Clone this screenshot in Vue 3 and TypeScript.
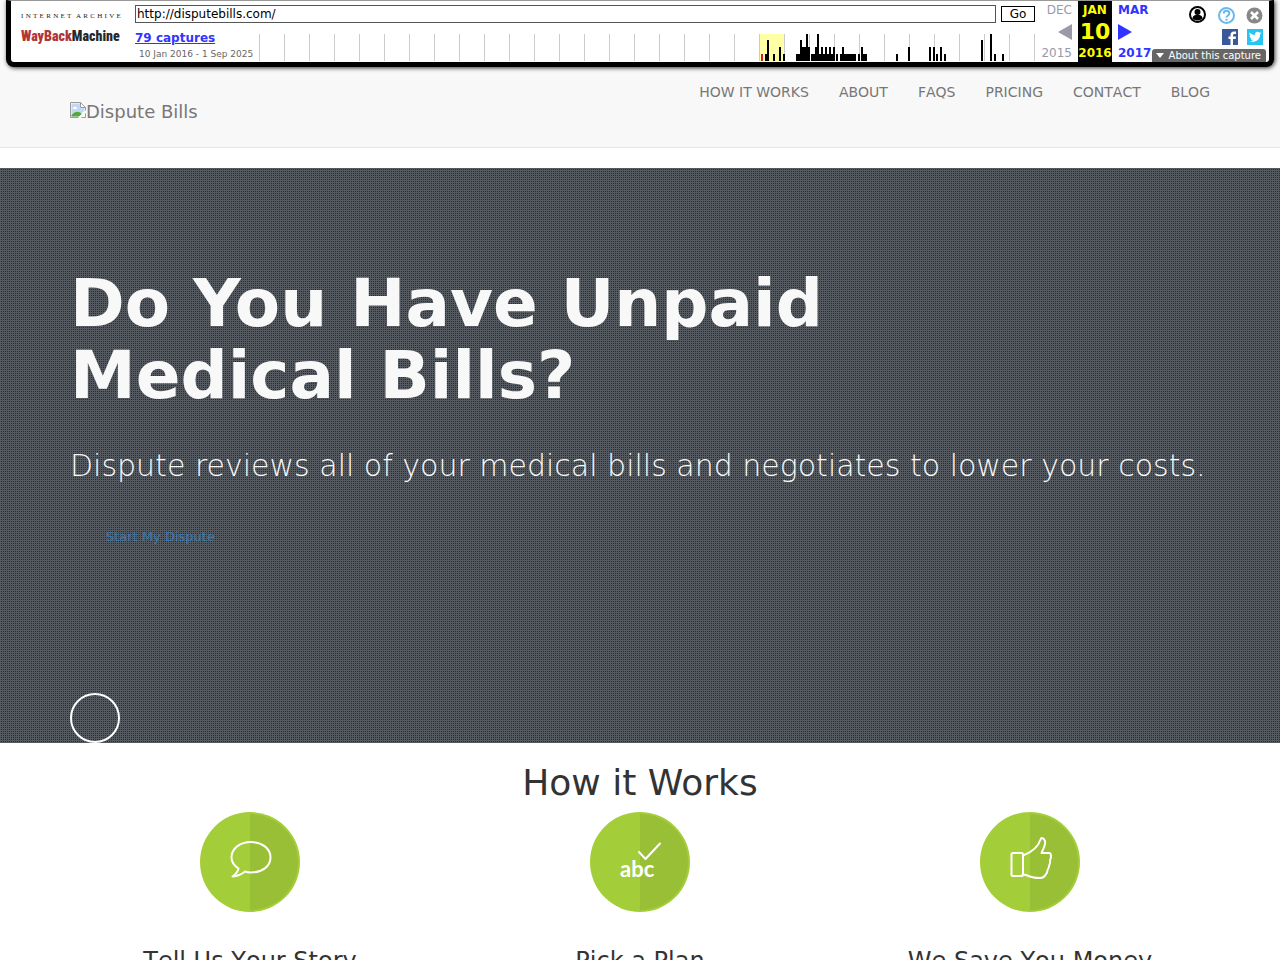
<script setup lang="ts">
interface Bar { x: number; w: number; h: number }
interface Step { title: string; icon: 'speech' | 'check' | 'thumb' }

const nav: string[] = ['HOW IT WORKS', 'ABOUT', 'FAQS', 'PRICING', 'CONTACT', 'BLOG']
const steps: Step[] = [
  { title: 'Tell Us Your Story', icon: 'speech' },
  { title: 'Pick a Plan', icon: 'check' },
  { title: 'We Save You Money', icon: 'thumb' },
]
const years: number[] = Array.from({ length: 32 }, (_, i) => i * 25)
const raw: [number, number, number][] = [
  [506, 2, 7], [508, 2, 21], [514, 2, 7], [520, 2, 14], [524, 2, 7],
  [537, 4, 7], [541, 2, 21], [543, 4, 14], [547, 2, 27], [549, 2, 14],
  [552, 4, 7], [556, 2, 14], [558, 2, 27], [560, 2, 7], [562, 2, 14],
  [564, 2, 7], [566, 2, 14], [568, 2, 7], [570, 2, 14], [572, 2, 7],
  [574, 2, 14], [577, 2, 7], [581, 2, 7], [583, 2, 14], [585, 12, 7],
  [599, 2, 7], [602, 2, 14], [604, 4, 7], [637, 2, 7], [649, 2, 14],
  [670, 2, 14], [674, 2, 14], [677, 2, 7], [681, 2, 14], [685, 2, 7],
  [722, 2, 21], [731, 2, 27], [735, 2, 7], [743, 2, 7],
]
const bars: Bar[] = raw.map(([x, w, h]) => ({ x, w, h }))
</script>

<template>
  <div class="page">
    <div class="archive">
      <a class="wb-logo" href="#" aria-label="Internet Archive Wayback Machine">
        <span class="wb-top"><i v-for="(c, n) in 'INTERNET ARCHIVE'" :key="n">{{ c }}</i></span>
        <span class="wb-word"><b>WayBack</b>Machine</span>
      </a>
      <div class="wb-main">
        <form class="wb-url" @submit.prevent>
          <input type="text" aria-label="Web address" value="http://disputebills.com/" />
          <button type="submit">Go</button>
        </form>
        <div class="wb-row">
          <div class="wb-caps">
            <a href="#">79 captures</a>
            <span>10 Jan 2016 - 1 Sep 2025</span>
          </div>
          <svg class="spark" viewBox="0 0 776 27" preserveAspectRatio="none" role="img" aria-label="Captures by year" shape-rendering="crispEdges">
            <rect x="500" width="25" height="27" fill="#ffffa5" />
            <rect v-for="y in years" :key="y" :x="y" width="1" height="27" fill="#ccc" />
            <rect x="502" y="20" width="2" height="7" fill="#c23" />
            <rect v-for="b in bars" :key="b.x" :x="b.x" :y="27 - b.h" :width="b.w" :height="b.h" />
          </svg>
        </div>
      </div>
      <div class="wb-dates">
        <div class="col prev"><span>DEC</span><svg width="14" height="16" aria-hidden="true"><path d="M14 0v16L0 8z" fill="#99a" /></svg><span>2015</span></div>
        <div class="col now"><span>JAN</span><strong>10</strong><span>2016</span></div>
        <div class="col next"><a href="#">MAR</a><svg width="14" height="16" aria-hidden="true"><path d="M0 0v16l14-8z" fill="#33f" /></svg><a href="#">2017</a></div>
      </div>
      <div class="wb-tools">
        <div class="icons">
          <a href="#" aria-label="Sign in"><svg width="18" height="18" viewBox="0 0 18 18"><circle cx="8.500" cy="8.500" r="7.500" fill="#fff" stroke="#000" stroke-width="2" /><circle cx="8.500" cy="6" r="3" /><path d="M3.500 12.500q0-3 3-3.500h4q3 .5 3 3.500-2 2-5 2t-5-2z" /></svg></a>
          <a href="#" aria-label="Help"><svg width="18" height="18" viewBox="0 0 18 18" fill="none" stroke="#6bb9ea" stroke-width="2"><circle cx="9.500" cy="9.500" r="7.500" /><path d="M6.700 7.500q0-2.700 2.800-2.700t2.800 2.700q0 1.300-1.500 2.100-1.300.7-1.300 1.900M9.500 12.800v2" /></svg></a>
          <button type="button" aria-label="Close"><svg width="18" height="18" viewBox="0 0 18 18"><circle cx="9.500" cy="9.500" r="8" fill="#888" /><path d="M6 6l7 7M13 6l-7 7" stroke="#fff" stroke-width="2.600" /></svg></button>
        </div>
        <div class="icons social">
          <a href="#" aria-label="Facebook"><svg width="16" height="16" viewBox="0 0 16 16"><path fill="#3b5998" d="M0 0h16v16H0z" /><path fill="#fff" d="M8.500 16v-6h-2V7.500h2V6q0-3.500 3.500-3.500h2V5h-1.500Q11 5 11 6.200v1.300h3l-.4 2.500H11v6z" /></svg></a>
          <a href="#" aria-label="Twitter"><svg width="16" height="16" viewBox="0 0 16 16"><path fill="#28c4f2" d="M0 0h16v16H0z" /><path fill="#fff" d="M2.500 3.500Q5 6 8 6q-.3-3 2.500-3.300 1 0 1.800.8l1.700-.6-1 1.500 1.500-.3-1.500 1.500q0 4-3 6t-7.500.9q2.200 0 3.500-1.100-2-.2-2.500-1.900h1.200Q2.500 8.700 2.500 6.500l1.200.3Q1.700 5.300 2.500 3.500z" /></svg></a>
        </div>
        <button type="button" class="about"><svg width="10" height="6" aria-hidden="true"><path d="M1 0h8L5 5z" fill="#fff" /></svg>About this capture</button>
      </div>
    </div>

    <header class="navbar">
      <div class="container bar">
        <a class="brand" href="#"><svg width="16" height="16" viewBox="0 0 16 16" aria-hidden="true"><path d="M.5 .5h10l5 5v10H.5z" fill="#fff" stroke="#9a9a9a" /><path d="M1.500 1.500h8.500v4.500h4.500v3L7 14.500H1.500z" fill="#c2d8f5" /><path d="M3 6q1-2 2.500-1Q7 5 7 7H3z" fill="#fff" /><path d="M1.500 14.500V13q5.500-6 10.500-1l-3 2.500z" fill="#55a83c" /><path d="M10.500 .5v5h5z" fill="#fff" stroke="#9a9a9a" /><path d="M8 16l8-8v3l-5 5z" fill="#f8f8f8" /></svg><span>Dispute Bills</span></a>
        <nav><a v-for="n in nav" :key="n" href="#">{{ n }}</a></nav>
      </div>
    </header>

    <section class="hero">
      <div class="container hero-in">
        <h1>Do You Have Unpaid<br />Medical Bills?</h1>
        <p>Dispute reviews all of your medical bills and negotiates to lower your costs.</p>
        <a class="cta" href="#">Start My Dispute</a>
        <a class="ring" href="#how" aria-label="Scroll down"></a>
      </div>
    </section>

    <section id="how" class="container how">
      <h2>How it Works</h2>
      <div class="steps">
        <article v-for="s in steps" :key="s.title">
          <svg width="100" height="100" viewBox="0 0 100 100" fill="none" stroke="#fff" stroke-width="2" stroke-linejoin="round" stroke-linecap="round" aria-hidden="true">
            <circle cx="50" cy="50" r="50" fill="#a4ce39" stroke="none" />
            <path d="M50 2a48 48 0 0 1 0 96z" fill="#99bf36" stroke="none" />
            <path v-if="s.icon === 'speech'" d="M38.500 56.500C34 53.500 31.500 49.500 31.500 45.500 31.500 36.500 40 30 51 30s19.500 6.500 19.500 15.500S62 60.500 51 60.500q-3.500 0-6-1-5.500 4.500-12.500 5 5-3.500 6-8z" />
            <template v-else-if="s.icon === 'check'">
              <path d="M49 40l6.500 7L70 31.500" />
              <text class="abc" x="30" y="65">abc</text>
            </template>
            <g v-else><rect x="31.500" y="41" width="11.500" height="23" rx="1.500" /><path d="M43 43.500c8-3 15-8 17.500-16 .5-2 3.500-2 4.500 1.500 1 4-2 8-3.500 12h7.500q2 0 2 3 0 3-1 4 .5 3-1 6 0 2-1.500 4 0 3-1.500 4-2 4-6 4-8 0-14-3l-3.500-.5" /></g>
          </svg>
          <h3>{{ s.title }}</h3>
        </article>
      </div>
    </section>
  </div>
</template>

<style>
html { scrollbar-width: none; }
body { margin: 0; background: #fff; }
</style>
<style scoped>
* { box-sizing: border-box; }
.page { font-family: "DejaVu Sans", sans-serif; font-size: 14px; line-height: 20px; color: #333; font-kerning: none; }
a { text-decoration: none; color: #337ab7; }
button { font-family: inherit; cursor: pointer; }
svg { display: block; flex: none; }
.archive { position: absolute; top: 0; left: 6px; right: 6px; height: 67px; display: flex; background: #fff; border: 5px solid #000; border-top: 1px solid #999; border-radius: 0 0 8px 8px; box-shadow: 1px 1px 4px #333; z-index: 2; font-size: 12px; line-height: 14px; }
.wb-logo { width: 124px; padding: 9px 0 0 10px; }
.wb-top { display: flex; justify-content: space-between; width: 100px; height: 12px; font-family: "Liberation Serif", serif; font-size: 7px; line-height: 12px; color: #222; }
.wb-top i { font-style: normal; }
.wb-word { display: block; font: 900 14px/28px "Liberation Sans Narrow", "Roboto Condensed", "Liberation Sans", sans-serif; color: #25282b; white-space: nowrap; }
.wb-word b { color: #b0353a; font-weight: 900; }
.wb-main { flex: 1; padding-top: 4px; min-width: 0; }
.wb-url { display: flex; gap: 5px; align-items: center; height: 18px; }
.wb-url input { flex: 1; min-width: 0; height: 18px; padding: 0 1px; border: 1px solid #555; border-radius: 0; font: 12px "DejaVu Sans", sans-serif; color: #000; background: #fff; }
.wb-url button { width: 34px; height: 16px; padding: 0; border: 1px solid #000; background: #fff; color: #000; font-size: 12px; line-height: 14px; }
.wb-row { display: flex; padding-top: 7px; }
.wb-caps { width: 124px; flex: none; white-space: nowrap; }
.wb-caps a { display: block; font-weight: bold; color: #33f; text-decoration: underline; line-height: 16px; }
.wb-caps span { display: block; padding-left: 4px; font-size: 9px; line-height: 16px; color: #666; }
.spark { flex: 1; min-width: 0; height: 27px; margin-top: 4px; }
.wb-dates { display: flex; width: 118px; }
.col { display: flex; flex-direction: column; justify-content: space-between; padding: 2px 0; height: 61px; color: #99a; }
.col a { color: #33f; font-weight: bold; }
.prev { width: 43px; align-items: flex-end; padding-right: 6px; }
.now { width: 34px; background: #000; color: #ff0; font-weight: bold; align-items: center; }
.now strong { font-size: 22px; line-height: 24px; }
.next { width: 41px; padding-left: 6px; }
.wb-tools { width: 116px; padding-top: 5px; display: flex; flex-direction: column; align-items: flex-end; }
.icons { display: flex; gap: 10px; padding-right: 6px; }
.icons button { border: 0; padding: 0; background: none; }
.social { gap: 9px; padding-top: 5px; }
.about { display: flex; align-items: center; gap: 4px; margin: 4px 3px 0 0; padding: 0 5px 0 3px; height: 14px; border: 0; border-radius: 3px 3px 0 0; background: #666; color: #fff; font-size: 10px; white-space: nowrap; }
.container { width: 1170px; max-width: 100%; margin: 0 auto; padding: 0 15px; }
.navbar { height: 148px; background: #f8f8f8; border-bottom: 1px solid #e7e7e7; margin-bottom: 20px; }
.bar { display: flex; justify-content: space-between; align-items: flex-start; }
.brand { display: flex; align-items: flex-start; margin-top: 102px; font-size: 18px; color: #777; }
nav { display: flex; gap: 30px; margin-top: 82px; }
nav a { color: #777; }
.hero { background: conic-gradient(from 90deg at 1px 1px, #282d32 90deg, #545a5f 0) 0 0 / 2px 2px; color: #f8f8f8; }
.hero-in { min-height: 575px; padding-top: 100px; display: flex; flex-direction: column; align-items: flex-start; }
h1, h2, .hero p { font-kerning: normal; }
h1 { margin: 0; font-size: 66px; line-height: 72px; font-weight: bold; }
.hero p { margin: 34px 0 0; font-size: 30px; line-height: 40px; font-weight: 200; }
.cta { margin: 41px 0 0 36px; font-size: 13px; }
.ring { width: 50px; height: 50px; border: 2px solid #fff; border-radius: 50%; margin-top: auto; }
h2 { margin: 0; padding-top: 20px; font-size: 36px; line-height: 40px; font-weight: 400; text-align: center; }
.steps { display: grid; grid-template-columns: repeat(3, 1fr); gap: 30px; margin-top: 9px; }
.steps article { display: flex; flex-direction: column; align-items: center; }
.abc { font: bold 22px Lato, sans-serif; fill: #fff; stroke: none; }
h3 { margin: 36px 0 10px; font-size: 24px; line-height: 26px; font-weight: 400; }
</style>
